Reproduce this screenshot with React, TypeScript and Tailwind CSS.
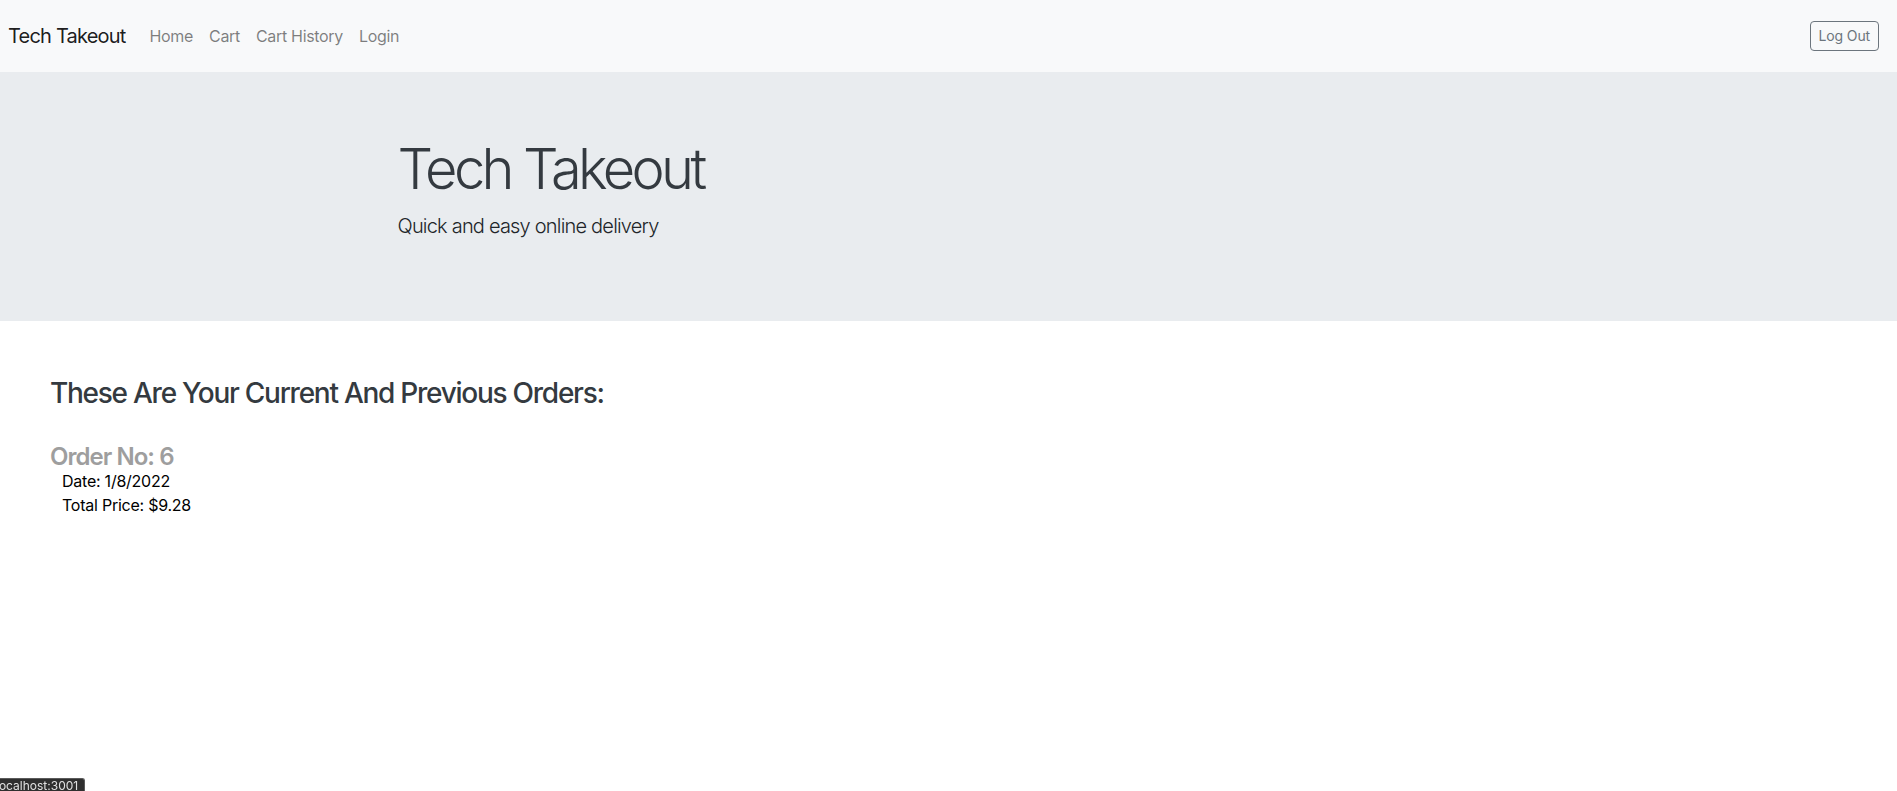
const navLinks = ["Home", "Cart", "Cart History", "Login"];

const orders = [{ id: 6, date: "1/8/2022", total: "$9.28" }];

const Navbar = () => (
  <nav className="flex h-[72px] items-center justify-between bg-[#f8f9fa] pl-[8px] pr-[18px]">
    <div className="flex items-center">
      <a className="mr-[16px] text-[20px] leading-[30px] tracking-[-0.04em] text-[rgba(0,0,0,0.9)]">Tech Takeout</a>
      <ul className="flex items-center">
        {navLinks.map((link) => (
          <li key={link}>
            <a className="block px-[8px] text-[16px] leading-6 tracking-[-0.02em] text-[rgba(0,0,0,0.5)]">{link}</a>
          </li>
        ))}
      </ul>
    </div>
    <button className="h-[30px] rounded-[4px] border border-[#6c757d] px-[8px] text-[14px] leading-5 tracking-[-0.01em] text-[#6c757d]">
      Log Out
    </button>
  </nav>
);

const Jumbotron = () => (
  <section className="bg-[#e9ecef] py-16">
    <div className="mx-auto w-[1140px] pl-[19px] pr-[15px]">
      <h1 className="mb-2 text-[56px] font-light leading-[1.2] tracking-[-0.065em] text-[#343a40]">Tech Takeout</h1>
      <p className="mb-4 text-[20px] font-light leading-[30px] tracking-[-0.04em] text-[#212529]">
        Quick and easy online delivery
      </p>
    </div>
  </section>
);

const OrderHistory = () => (
  <main className="px-[50px] pt-[56px]">
    <h3 className="text-[28px] font-medium leading-[1.2] tracking-[-0.045em] text-[#343a40]">
      These Are Your Current And Previous Orders:
    </h3>
    {orders.map((order) => (
      <div key={order.id} className="mt-8">
        <h4 className="text-[24px] font-semibold leading-[1.2] tracking-[-0.04em] text-[#9e9e9e]">Order No: {order.id}</h4>
        <div className="-mt-[3px] pl-[12px] text-[16px] leading-6 tracking-[-0.015em] text-black">
          <p>Date: {order.date}</p>
          <p>Total Price: {order.total}</p>
        </div>
      </div>
    ))}
  </main>
);

export default function App() {
  return (
    <div className="min-h-screen bg-white font-['Inter',sans-serif]">
      <Navbar />
      <Jumbotron />
      <OrderHistory />
      <div className="fixed bottom-0 left-0 h-[13px] overflow-hidden rounded-tr-[3px] border-t border-r border-[#5a5a5a] bg-[#2f2f2f] pr-[6px] pl-0">
        <span className="-ml-[4px] block text-[12px] leading-[14px] text-[#e0e0e0]">localhost:3001</span>
      </div>
    </div>
  );
}
